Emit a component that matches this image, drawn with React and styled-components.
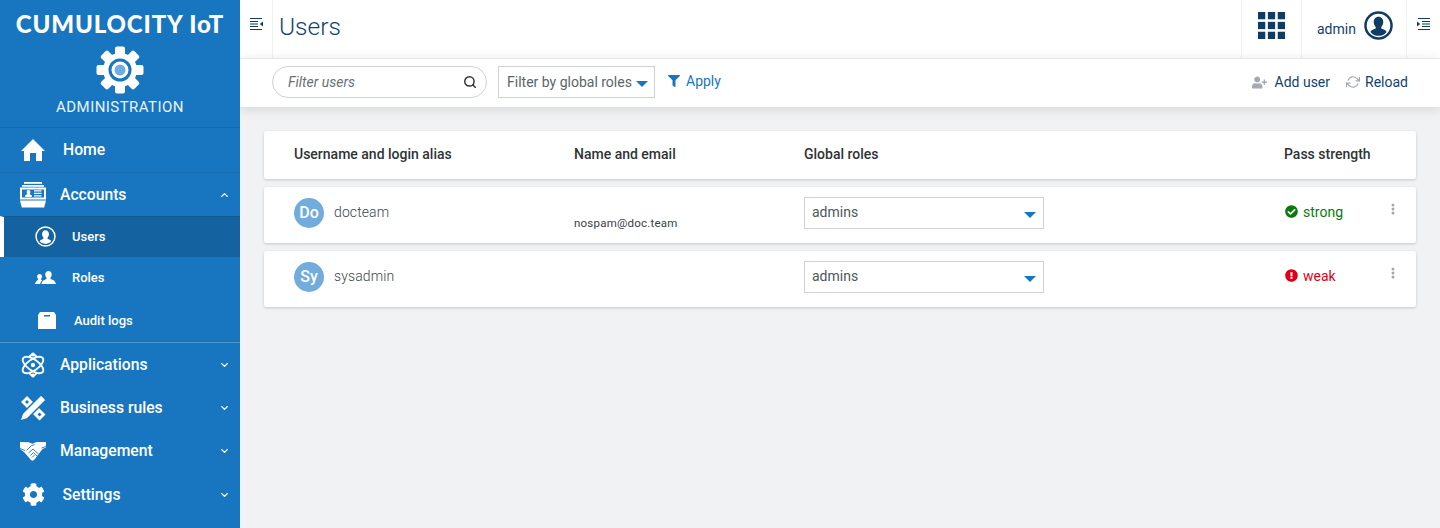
import React from "react";
import styled, { createGlobalStyle } from "styled-components";
import { FaCog, FaCheckCircle, FaExclamationCircle, FaFilter, FaUserPlus } from "react-icons/fa";
import { FiSearch, FiRefreshCw, FiChevronDown, FiChevronUp } from "react-icons/fi";

const GlobalStyle = createGlobalStyle`
  html, body {
    margin: 0;
    padding: 0;
    height: 528px;
    overflow: hidden;
    background: #f1f2f4;
    font-family: Roboto, "Liberation Sans", sans-serif;
  }
  * { box-sizing: border-box; }
`;

const Page = styled.div`
  display: flex;
  width: 1440px;
  height: 528px;
`;

const Sidebar = styled.aside`
  width: 240px;
  flex: none;
  background: #1776bf;
  color: #fff;
  display: flex;
  flex-direction: column;
`;

const Brand = styled.div`
  height: 128px;
  border-bottom: 1px solid #1569ab;
  display: flex;
  flex-direction: column;
  align-items: center;
  padding-top: 8px;
`;

const Logo = styled.div`
  font-family: Lato, sans-serif;
  font-weight: 900;
  font-size: 24px;
  line-height: 32px;
  letter-spacing: 0.85px;
  white-space: nowrap;
`;

const AppIcon = styled.svg`
  width: 48px;
  height: 48px;
  margin-top: 6px;
`;

const AppName = styled.div`
  font-size: 15px;
  line-height: 18px;
  margin-top: 4px;
  letter-spacing: 0.45px;
  color: #eaf3fa;
`;

const NavItem = styled.div`
  height: ${(p) => p.$h}px;
  display: flex;
  align-items: center;
  padding-left: ${(p) => p.$pad || 20}px;
  padding-top: ${(p) => p.$top || 0}px;
  padding-bottom: ${(p) => p.$bottom || 0}px;
  font-size: 15.7px;
  font-weight: 500;
  position: relative;
  border-bottom: ${(p) => (p.$line ? `1px solid ${p.$line}` : "none")};
`;

const NavIconBox = styled.span`
  width: ${(p) => p.$w || 40}px;
  flex: none;
  display: flex;
  align-items: center;
  svg { display: block; }
`;

const Caret = styled.span`
  position: absolute;
  right: 10px;
  top: 50%;
  transform: translateY(-50%);
  display: flex;
`;

const SubItem = styled.div`
  height: ${(p) => p.$h}px;
  display: flex;
  align-items: center;
  padding-left: ${(p) => p.$pad || 35}px;
  padding-bottom: ${(p) => p.$bottom || 0}px;
  font-size: 13px;
  font-weight: 500;
  background: ${(p) => (p.$active ? "#14629f" : "transparent")};
  border-left: ${(p) => (p.$active ? "4px solid #fff" : "none")};
  border-top: ${(p) => (p.$active ? "1px solid #125a92" : "none")};
`;

const SubGroup = styled.div`
  border-bottom: 1px solid #4f96cd;
`;

const Main = styled.main`
  flex: 1;
  min-width: 0;
  display: flex;
  flex-direction: column;
  overflow: hidden;
`;

const TopBar = styled.header`
  height: 59px;
  background: #fff;
  border-bottom: 1px solid #f0f1f2;
  display: flex;
  align-items: stretch;
  color: #0f3c64;
`;

const ToggleCell = styled.div`
  width: 33px;
  border-right: 1px solid #f0f1f2;
  display: flex;
  justify-content: center;
  padding: 17px 0 0 1px;
`;

const PageTitle = styled.h1`
  margin: 0;
  flex: 1;
  padding-left: 6px;
  font-size: 24.5px;
  font-weight: 300;
  line-height: 53px;
  color: #14426b;
`;

const GridCell = styled.div`
  width: 61px;
  border-left: 1px solid #f0f1f2;
  border-right: 1px solid #f0f1f2;
  display: flex;
  justify-content: center;
  padding-top: 12px;
`;

const UserCell = styled.div`
  width: 105px;
  border-right: 1px solid #f0f1f2;
  display: flex;
  align-items: flex-start;
  padding: 11px 0 0 15px;
  font-size: 14px;
  gap: 8px;
  span { margin-top: 10px; line-height: 16px; color: #14426b; }
`;

const EndCell = styled.div`
  width: 33px;
  display: flex;
  justify-content: center;
  padding-top: 17px;
`;

const Toolbar = styled.div`
  height: 48px;
  background: #fff;
  box-shadow: 0 2px 12px rgba(0, 0, 0, 0.13);
  display: flex;
  align-items: flex-start;
  padding: 7px 32px 0 32px;
  position: relative;
`;

const SearchBox = styled.div`
  width: 215px;
  height: 32px;
  border: 1px solid #ced2d6;
  border-radius: 16px;
  display: flex;
  align-items: center;
  justify-content: space-between;
  padding: 0 9px 0 15px;
  font-size: 14px;
  font-style: italic;
  color: #6b7176;
`;

const FilterSelect = styled.div`
  width: 157px;
  height: 32px;
  margin-left: 11px;
  border: 1px solid #ced2d6;
  display: flex;
  align-items: center;
  padding-left: 8px;
  font-size: 14px;
  color: #5d6469;
  white-space: nowrap;
  gap: 4px;
`;

const Arrow = styled.span`
  width: 0;
  height: 0;
  border-left: 6.5px solid transparent;
  border-right: 6.5px solid transparent;
  border-top: 6px solid #1776bf;
  margin-top: 3px;
`;

const ApplyButton = styled.div`
  margin-left: 13px;
  height: 30px;
  display: flex;
  align-items: center;
  gap: 6px;
  font-size: 14px;
  color: #1776bf;
`;

const Spacer = styled.div`
  flex: 1;
`;

const ActionButton = styled.div`
  height: 32px;
  display: flex;
  align-items: center;
  gap: ${(p) => p.$gap}px;
  margin-left: ${(p) => p.$ml || 0}px;
  font-size: 14px;
  color: #14426b;
`;

const Content = styled.div`
  padding: 24px 24px 0 24px;
  display: flex;
  flex-direction: column;
  gap: 8px;
`;

const Card = styled.div`
  height: ${(p) => p.$h}px;
  background: #fff;
  border-radius: 2px;
  box-shadow: 0 1px 3px rgba(0, 0, 0, 0.18);
  display: grid;
  grid-template-columns: 280px 230px 480px 1fr;
  padding-left: 30px;
  position: relative;
`;

const HeadCell = styled.div`
  font-size: 14px;
  font-weight: 500;
  color: #2f3336;
  line-height: 47px;
`;

const UserInfo = styled.div`
  display: flex;
  align-items: flex-start;
  padding-top: 11px;
  gap: 10px;
  font-size: 14px;
  font-weight: 300;
  color: #3f4549;
  span { line-height: 28px; letter-spacing: 0.1px; }
`;

const Avatar = styled.div`
  width: 30px;
  height: 30px;
  border-radius: 50%;
  background: #71acdc;
  color: #fff;
  font-size: 16px;
  font-weight: 500;
  display: flex;
  align-items: center;
  justify-content: center;
  span { line-height: 30px; letter-spacing: 0; }
`;

const Email = styled.div`
  font-size: 11.5px;
  padding-top: 28px;
  line-height: 16px;
  color: #3b4044;
  letter-spacing: 0.22px;
`;

const RoleCell = styled.div`
  padding-top: 10px;
`;

const RoleSelect = styled.div`
  width: 240px;
  height: 32px;
  border: 1px solid #ced2d6;
  display: flex;
  align-items: center;
  justify-content: space-between;
  padding: 0 7px 0 7px;
  font-size: 14px;
  color: #50565a;
  span:first-child { margin-top: -2px; }
`;

const Strength = styled.div`
  padding: 17px 0 0 1px;
  display: flex;
  align-items: flex-start;
  gap: 5px;
  font-size: 14px;
  line-height: 16px;
  color: ${(p) => p.$color};
  svg { margin-top: 1px; }
`;

const Dots = styled.svg`
  position: absolute;
  right: 21px;
  top: 16px;
`;

const ToggleIcon = ({ flip }) => (
  <svg width="15" height="14" viewBox="0 0 15 14" fill="none" stroke="#0f3c64" strokeWidth="1.2" style={flip ? { transform: "scaleX(-1)" } : undefined}>
    <path d="M1 1.5h12M1 4.5h8M1 7h8M1 9.5h8M1 12.5h12" />
    <path d="M14 4.5v5L10.8 7z" fill="#0f3c64" stroke="none" />
  </svg>
);

const AppGear = () => (
  <AppIcon viewBox="0 0 48 48">
    <g fill="#fff">
      <circle cx="24" cy="24" r="17" />
      {[0, 45, 90, 135, 180, 225, 270, 315].map((a) => (
        <rect key={a} x="19" y="0.5" width="10" height="9" rx="2" transform={`rotate(${a} 24 24)`} />
      ))}
    </g>
    <circle cx="24" cy="24" r="11.5" fill="#1776bf" />
    <circle cx="24" cy="24" r="8.5" fill="#fff" />
    <circle cx="24" cy="24" r="5.5" fill="#71acdc" />
  </AppIcon>
);

const HomeIcon = () => (
  <svg width="24" height="22" viewBox="0 0 24 22" fill="#fff">
    <path d="M12 0l12 12h-3v10H3V12H0z" />
    <rect x="9" y="14" width="6" height="8" fill="#1776bf" />
  </svg>
);

const AccountsIcon = () => (
  <svg width="26" height="26" viewBox="0 0 26 26" fill="#fff">
    <rect x="4" y="0" width="18" height="1.8" />
    <rect x="2" y="3" width="22" height="1.8" />
    <rect x="1" y="6.5" width="24" height="10" fill="none" stroke="#fff" strokeWidth="2" />
    <path d="M8.500 8c1.200 0 1.900.9 1.900 2 0 .8-.3 1.300-.6 1.600v.7l2 1V15H5.200v-1.700l2-1v-.7c-.3-.3-.6-.8-.6-1.600 0-1.100.7-2 1.900-2z" />
    <path d="M14 8.200h7.500v1.300H14zM14 10.700h7.500V12H14zM14 13.200h7.500v1.300H14z" />
    <path d="M0 18.500h26l-1.800 7H1.800z" />
  </svg>
);

const AtomIcon = () => (
  <svg width="26" height="26" viewBox="0 0 26 26" fill="none" stroke="#fff" strokeWidth="1.8">
    <ellipse cx="13" cy="13" rx="12" ry="5.5" transform="rotate(35 13 13)" />
    <ellipse cx="13" cy="13" rx="12" ry="5.5" transform="rotate(-35 13 13)" />
    <path d="M9.500 5c1-3 6-3 7 0M9.500 21c1 3 6 3 7 0" />
    <circle cx="13" cy="2.5" r="2" fill="#fff" stroke="none" />
    <circle cx="13" cy="23.5" r="2" fill="#fff" stroke="none" />
    <circle cx="13" cy="13" r="2.2" fill="#fff" stroke="none" />
  </svg>
);

const RulesIcon = () => (
  <svg width="26" height="26" viewBox="0 0 26 26" fill="#fff">
    <path d="M1 7l6-6 6 6-6 6zM13 19l6-6 6.500 6.500-6 6z" />
    <path d="M5 7l2-2 2 2-2 2zM17.500 19.500l2-2 2 2-2 2z" fill="#1776bf" />
    <path d="M21 0l5 5L7.500 23.500 0 26l2.500-7.500z" stroke="#1776bf" strokeWidth="1.2" />
  </svg>
);

const HandshakeIcon = () => (
  <svg width="26" height="20" viewBox="0 0 26 20" fill="#fff">
    <path d="M0 1l8.500.3 4 1.500L16.500 1 26 1v5.500l-3.500 1.500L14.500 18.500q-2 2-3.500 .5L4 11 0 8z" />
    <path d="M6.500 9.500L11.500 4.500l3-.8M8.500 12l4.500-4 5.500 5M10.500 14.500l3-3 3.500 3.500M12 16.500l2.500-2.500M0 7.500l5 2M26 5.500l-4.500 1.500" fill="none" stroke="#1776bf" strokeWidth="0.9" />
  </svg>
);

const UserCircle = ({ size, color, stroke }) => (
  <svg width={size} height={size} viewBox="0 0 28 28">
    <circle cx="14" cy="14" r="12.6" fill="none" stroke={color} strokeWidth={stroke} />
    <path d="M14 5.500c3 0 4.600 2.400 4.600 5.200 0 2-.8 3.800-1.900 4.800v1.400c1.600.9 4.200 1.200 5.100 3.300A10.500 10.500 0 0 1 14 24a10.500 10.500 0 0 1-7.800-3.800c.9-2.100 3.500-2.400 5.100-3.300v-1.400c-1.100-1-1.900-2.800-1.900-4.800 0-2.800 1.600-5.200 4.600-5.200z" fill={color} />
  </svg>
);

const RolesIcon = () => (
  <svg width="21" height="13" viewBox="0 0 21 13" fill="#fff">
    <path d="M13.500 0c2 0 3.200 1.500 3.200 3.500 0 1.300-.5 2.500-1.200 3.200v1.300c1.800.8 4.500 1 5.500 5H6.500c.6-3.500 3.200-4.200 5-5V6.700c-.7-.7-1.200-1.900-1.200-3.200C10.300 1.500 11.500 0 13.500 0z" />
    <path d="M4.500 3c1.500 0 2.500 1.100 2.500 2.600 0 1-.4 1.800-.9 2.400v.7c.4.200.8.300 1.100.5-1 .8-1.700 2-2.100 4H0c.3-2.700 2-3.500 3-4.200V8C2.500 7.400 2.100 6.600 2.100 5.600 2.100 4.100 3 3 4.500 3z" />
  </svg>
);

const AuditIcon = () => (
  <svg width="18" height="17" viewBox="0 0 18 17" fill="#fff">
    <path d="M2 0h14l2 3v14H0V3z" />
    <rect x="6" y="3" width="6" height="1.5" fill="#1776bf" />
  </svg>
);

const AppsGrid = () => (
  <svg width="27" height="27" viewBox="0 0 26 26" fill="#0f3c64">
    {[0, 9.5, 19].map((y) =>
      [0, 9.5, 19].map((x) => <rect key={`${x}-${y}`} x={x} y={y} width="7" height="7" />)
    )}
  </svg>
);

const RoleDropdown = () => (
  <RoleSelect>
    <span>admins</span>
    <Arrow />
  </RoleSelect>
);

const KebabDots = () => (
  <Dots width="4" height="12" viewBox="0 0 4 12" fill="#a3a8ac">
    <circle cx="2" cy="2" r="1.5" />
    <circle cx="2" cy="6" r="1.5" />
    <circle cx="2" cy="10" r="1.5" />
  </Dots>
);

const App = () => {
  return (
    <Page>
      <GlobalStyle />
      <Sidebar>
        <Brand>
          <Logo>CUMULOCITY IoT</Logo>
          <AppGear />
          <AppName>ADMINISTRATION</AppName>
        </Brand>
        <NavItem $h={45} $pad={21} $bottom={1} $line="#1a6fb1">
          <NavIconBox $w={42}><HomeIcon /></NavIconBox>
          Home
        </NavItem>
        <NavItem $h={43}>
          <NavIconBox><AccountsIcon /></NavIconBox>
          Accounts
          <Caret><FiChevronUp size={11} strokeWidth={3} /></Caret>
        </NavItem>
        <SubGroup>
          <SubItem $h={41} $pad={31} $bottom={2} $active>
            <NavIconBox $w={37}><UserCircle size={21} color="#fff" stroke={2} /></NavIconBox>
            Users
          </SubItem>
          <SubItem $h={42} $bottom={2}>
            <NavIconBox $w={37}><RolesIcon /></NavIconBox>
            Roles
          </SubItem>
          <SubItem $h={43} $pad={38}>
            <NavIconBox $w={36}><AuditIcon /></NavIconBox>
            Audit logs
          </SubItem>
        </SubGroup>
        <NavItem $h={43}>
          <NavIconBox><AtomIcon /></NavIconBox>
          Applications
          <Caret><FiChevronDown size={11} strokeWidth={3} /></Caret>
        </NavItem>
        <NavItem $h={43}>
          <NavIconBox><RulesIcon /></NavIconBox>
          Business rules
          <Caret><FiChevronDown size={11} strokeWidth={3} /></Caret>
        </NavItem>
        <NavItem $h={43}>
          <NavIconBox><HandshakeIcon /></NavIconBox>
          Management
          <Caret><FiChevronDown size={11} strokeWidth={3} /></Caret>
        </NavItem>
        <NavItem $h={45} $pad={22}>
          <NavIconBox $w={40.5}><FaCog size={23} /></NavIconBox>
          Settings
          <Caret><FiChevronDown size={11} strokeWidth={3} /></Caret>
        </NavItem>
      </Sidebar>
      <Main>
        <TopBar>
          <ToggleCell><ToggleIcon /></ToggleCell>
          <PageTitle>Users</PageTitle>
          <GridCell><AppsGrid /></GridCell>
          <UserCell>
            <span>admin</span>
            <UserCircle size={29} color="#0f3c64" stroke={2.4} />
          </UserCell>
          <EndCell><ToggleIcon flip /></EndCell>
        </TopBar>
        <Toolbar>
          <SearchBox>
            Filter users
            <FiSearch size={14} color="#2f3336" strokeWidth={2.5} />
          </SearchBox>
          <FilterSelect>
            Filter by global roles
            <Arrow />
          </FilterSelect>
          <ApplyButton>
            <FaFilter size={12} />
            Apply
          </ApplyButton>
          <Spacer />
          <ActionButton $gap={8}>
            <FaUserPlus size={15} color="#a3aab0" />
            Add user
          </ActionButton>
          <ActionButton $gap={5} $ml={16}>
            <FiRefreshCw size={14} color="#a3aab0" />
            Reload
          </ActionButton>
        </Toolbar>
        <Content>
          <Card $h={48}>
            <HeadCell>Username and login alias</HeadCell>
            <HeadCell>Name and email</HeadCell>
            <HeadCell>Global roles</HeadCell>
            <HeadCell>Pass strength</HeadCell>
          </Card>
          <Card $h={56}>
            <UserInfo>
              <Avatar><span>Do</span></Avatar>
              <span>docteam</span>
            </UserInfo>
            <Email>nospam@doc.team</Email>
            <RoleCell><RoleDropdown /></RoleCell>
            <Strength $color="#0a7a0a">
              <FaCheckCircle size={13} />
              strong
            </Strength>
            <KebabDots />
          </Card>
          <Card $h={56}>
            <UserInfo>
              <Avatar><span>Sy</span></Avatar>
              <span>sysadmin</span>
            </UserInfo>
            <Email />
            <RoleCell><RoleDropdown /></RoleCell>
            <Strength $color="#e0001b">
              <FaExclamationCircle size={13} />
              weak
            </Strength>
            <KebabDots />
          </Card>
        </Content>
      </Main>
    </Page>
  );
};

export default App;
